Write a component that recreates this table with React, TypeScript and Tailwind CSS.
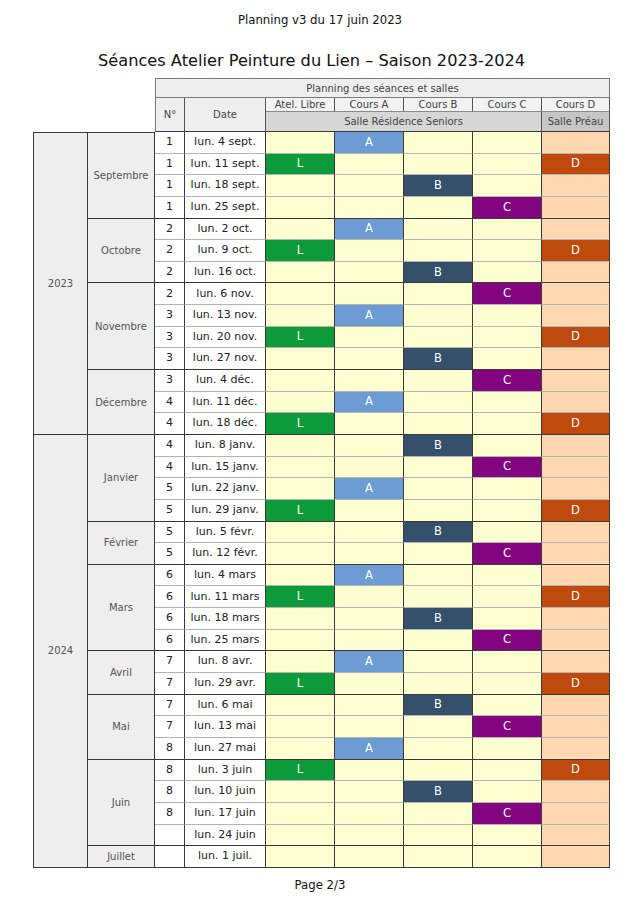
import React from 'react';

type Row = { n: string; date: string; c: string };
type Month = { name: string; rows: Row[] };
type Year = { year: string; months: Month[] };

const data: Year[] = [
  {
    year: '2023',
    months: [
      { name: 'Septembre', rows: [
        { n: '1', date: 'lun. 4 sept.', c: 'A' },
        { n: '1', date: 'lun. 11 sept.', c: 'L' },
        { n: '1', date: 'lun. 18 sept.', c: 'B' },
        { n: '1', date: 'lun. 25 sept.', c: 'C' },
      ] },
      { name: 'Octobre', rows: [
        { n: '2', date: 'lun. 2 oct.', c: 'A' },
        { n: '2', date: 'lun. 9 oct.', c: 'L' },
        { n: '2', date: 'lun. 16 oct.', c: 'B' },
      ] },
      { name: 'Novembre', rows: [
        { n: '2', date: 'lun. 6 nov.', c: 'C' },
        { n: '3', date: 'lun. 13 nov.', c: 'A' },
        { n: '3', date: 'lun. 20 nov.', c: 'L' },
        { n: '3', date: 'lun. 27 nov.', c: 'B' },
      ] },
      { name: 'Décembre', rows: [
        { n: '3', date: 'lun. 4 déc.', c: 'C' },
        { n: '4', date: 'lun. 11 déc.', c: 'A' },
        { n: '4', date: 'lun. 18 déc.', c: 'L' },
      ] },
    ],
  },
  {
    year: '2024',
    months: [
      { name: 'Janvier', rows: [
        { n: '4', date: 'lun. 8 janv.', c: 'B' },
        { n: '4', date: 'lun. 15 janv.', c: 'C' },
        { n: '5', date: 'lun. 22 janv.', c: 'A' },
        { n: '5', date: 'lun. 29 janv.', c: 'L' },
      ] },
      { name: 'Février', rows: [
        { n: '5', date: 'lun. 5 févr.', c: 'B' },
        { n: '5', date: 'lun. 12 févr.', c: 'C' },
      ] },
      { name: 'Mars', rows: [
        { n: '6', date: 'lun. 4 mars', c: 'A' },
        { n: '6', date: 'lun. 11 mars', c: 'L' },
        { n: '6', date: 'lun. 18 mars', c: 'B' },
        { n: '6', date: 'lun. 25 mars', c: 'C' },
      ] },
      { name: 'Avril', rows: [
        { n: '7', date: 'lun. 8 avr.', c: 'A' },
        { n: '7', date: 'lun. 29 avr.', c: 'L' },
      ] },
      { name: 'Mai', rows: [
        { n: '7', date: 'lun. 6 mai', c: 'B' },
        { n: '7', date: 'lun. 13 mai', c: 'C' },
        { n: '8', date: 'lun. 27 mai', c: 'A' },
      ] },
      { name: 'Juin', rows: [
        { n: '8', date: 'lun. 3 juin', c: 'L' },
        { n: '8', date: 'lun. 10 juin', c: 'B' },
        { n: '8', date: 'lun. 17 juin', c: 'C' },
        { n: '', date: 'lun. 24 juin', c: '' },
      ] },
      { name: 'Juillet', rows: [
        { n: '', date: 'lun. 1 juil.', c: '' },
      ] },
    ],
  },
];

// one entry per course column: which session code fills it, and its colour
const courses = [
  { code: 'L', fill: 'bg-[#0d9a38]', base: 'bg-[#ffffd2]' },
  { code: 'A', fill: 'bg-[#6d9bd3]', base: 'bg-[#ffffd2]' },
  { code: 'B', fill: 'bg-[#35506b]', base: 'bg-[#ffffd2]' },
  { code: 'C', fill: 'bg-[#82047f]', base: 'bg-[#ffffd2]' },
  { code: 'D', fill: 'bg-[#c04a0c]', base: 'bg-[#fdd8b1]' },
];

const center = 'flex items-center justify-center';

export default function App() {
  const cells: React.ReactNode[] = [];
  let row = 4; // grid rows 1-3 are the header

  data.forEach((y) => {
    const yearRows = y.months.reduce((s, m) => s + m.rows.length, 0);
    cells.push(
      <div
        key={'y' + y.year}
        className={`${center} bg-[#eeeeee] border-l border-r border-b border-[#3a3a3a] text-[10px] text-[#555] ${y.year === '2023' ? 'border-t' : ''}`}
        style={{ gridColumn: '1', gridRow: `${row} / span ${yearRows}` }}
      >
        {y.year}
      </div>
    );
    y.months.forEach((m) => {
      cells.push(
        <div
          key={'m' + m.name}
          className={`${center} bg-[#eeeeee] border-r border-b border-[#3a3a3a] text-[10px] text-[#555] ${row === 4 ? 'border-t' : ''}`}
          style={{ gridColumn: '2', gridRow: `${row} / span ${m.rows.length}` }}
        >
          {m.name}
        </div>
      );
      m.rows.forEach((r, i) => {
        const last = i === m.rows.length - 1;
        const bottom = last ? 'border-b-[#3a3a3a]' : 'border-b-[#b4b4b4]';
        const key = m.name + i;
        cells.push(
          <div key={key + 'n'} className={`${center} bg-white border-r border-b border-r-[#3a3a3a] ${bottom} text-[11px] text-[#222]`} style={{ gridColumn: '3', gridRow: `${row}` }}>
            {r.n}
          </div>,
          <div key={key + 'd'} className={`${center} bg-white border-r border-b border-r-[#3a3a3a] ${bottom} text-[11px] text-[#222]`} style={{ gridColumn: '4', gridRow: `${row}` }}>
            {r.date}
          </div>
        );
        courses.forEach((c, ci) => {
          const on = r.c === c.code || (r.c === 'L' && c.code === 'D');
          cells.push(
            <div
              key={key + c.code}
              className={`${center} border-r border-b border-r-[#3a3a3a] ${bottom} text-[11.5px] text-white ${on ? c.fill : c.base}`}
              style={{ gridColumn: `${5 + ci}`, gridRow: `${row}` }}
            >
              {on ? c.code : ''}
            </div>
          );
        });
        row++;
      });
    });
  });

  return (
    <div className="w-[640px] h-[906px] bg-white flex flex-col items-center font-['DejaVu_Sans',sans-serif] text-[#111]">
      <p className="mt-[12px] text-[11.7px] leading-[16px]">Planning v3 du 17 juin 2023</p>
      <h1 className="mt-[23px] self-start ml-[98px] text-[16.2px] leading-[20px]">Séances Atelier Peinture du Lien – Saison 2023-2024</h1>
      <div className="mt-[7px] self-start ml-[33px] grid grid-cols-[55px_67px_30px_81px_69px_69px_69px_69px_68px] grid-rows-[20px_14px_20px_repeat(34,21.65px)]">
        {/* header */}
        <div className="col-start-3 col-span-7 row-start-1 flex items-center justify-center bg-[#eeeeee] border border-[#7a7a7a] text-[10px] text-[#444]">
          Planning des séances et salles
        </div>
        <div className="col-start-3 row-start-2 row-span-2 flex items-center justify-center bg-[#eeeeee] border-l border-r border-b border-l-[#7a7a7a] border-r-[#555] border-b-[#3a3a3a] text-[10px] text-[#444]">
          N°
        </div>
        <div className="col-start-4 row-start-2 row-span-2 flex items-center justify-center bg-[#eeeeee] border-r border-b border-r-[#555] border-b-[#3a3a3a] text-[10px] text-[#444]">
          Date
        </div>
        {['Atel. Libre', 'Cours A', 'Cours B', 'Cours C', 'Cours D'].map((t, i) => (
          <div
            key={t}
            className="flex items-center justify-center bg-[#f2f2f2] border-r border-b border-r-[#555] border-b-[#8a8a8a] text-[10px] text-[#444]"
            style={{ gridColumn: `${5 + i}`, gridRow: '2' }}
          >
            {t}
          </div>
        ))}
        <div className="col-start-5 col-span-4 row-start-3 flex items-center justify-center bg-[#d6d6d6] border-r border-b border-r-[#555] border-b-[#3a3a3a] text-[10px] text-[#444]">
          Salle Résidence Seniors
        </div>
        <div className="col-start-9 row-start-3 flex items-center justify-center bg-[#c6c6c6] border-r border-b border-r-[#555] border-b-[#3a3a3a] text-[10px] text-[#444]">
          Salle Préau
        </div>
        {cells}
      </div>
      <p className="mt-[9px] text-[11.7px] leading-[16px]">Page 2/3</p>
    </div>
  );
}
